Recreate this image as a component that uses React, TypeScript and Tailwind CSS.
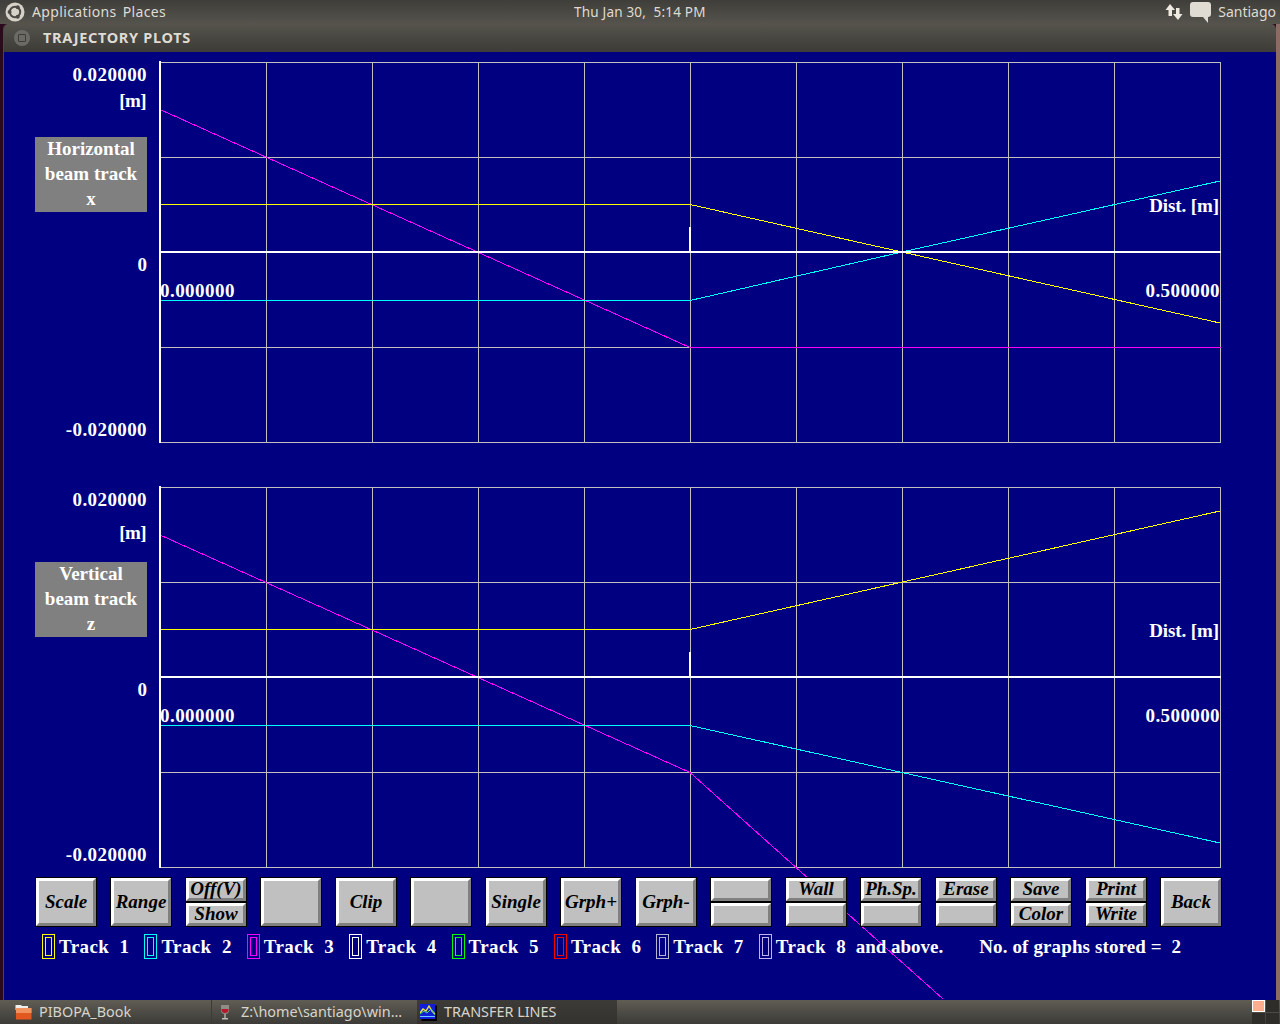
import React from 'react';

const BUTTONS: (string | [string, string])[] = [
  'Scale', 'Range', ['Off(V)', 'Show'], '', 'Clip', '', 'Single', 'Grph+', 'Grph-',
  ['', ''], ['Wall', ''], ['Ph.Sp.', ''], ['Erase', ''], ['Save', 'Color'], ['Print', 'Write'], 'Back',
];

const TRACKS = [
  { label: 'Track  1', color: 'border-[#ffff00]' },
  { label: 'Track  2', color: 'border-[#00ffff]' },
  { label: 'Track  3', color: 'border-[#ff00ff]' },
  { label: 'Track  4', color: 'border-[#ffffff]' },
  { label: 'Track  5', color: 'border-[#00ff00]' },
  { label: 'Track  6', color: 'border-[#ff0000]' },
  { label: 'Track  7', color: 'border-[#b4b4d2]' },
];

const VLINES = [106, 212, 318, 424, 530, 636, 742, 848, 954];

interface Line {
  points: string;
  color: string;
}

const Plot: React.FC<{ lines: Line[] }> = ({ lines }) => (
  <div className="relative h-[381px] w-[1061px] shrink-0">
    <svg width="1061" height="381" className="absolute left-0 top-0 overflow-visible">
      <g shapeRendering="crispEdges" stroke="#c0c0c0" strokeWidth="1">
        {VLINES.map((x) => (
          <line key={x} x1={x + 0.5} y1="0" x2={x + 0.5} y2="381" />
        ))}
        <line x1="1060.5" y1="0" x2="1060.5" y2="381" />
        <line x1="0" y1="0.5" x2="1061" y2="0.5" />
        <line x1="0" y1="95.5" x2="1061" y2="95.5" />
        <line x1="0" y1="285.5" x2="1061" y2="285.5" />
        <line x1="0" y1="380.5" x2="1061" y2="380.5" />
      </g>
      {lines.map((l, i) => (
        <polyline key={i} points={l.points} fill="none" stroke={l.color} strokeWidth="1" shapeRendering="crispEdges" />
      ))}
      <rect x="-1" y="-1" width="2" height="382" fill="#ffffff" shapeRendering="crispEdges" />
      <rect x="0" y="189" width="1061" height="2" fill="#ffffff" shapeRendering="crispEdges" />
      <rect x="529" y="165" width="2" height="24" fill="#ffffff" shapeRendering="crispEdges" />
    </svg>
    <span className="absolute right-[2px] top-[133px] text-[19px] font-bold leading-[22px] tracking-[-0.1px] text-white">Dist. [m]</span>
    <span className="absolute left-0 top-[218px] text-[19px] font-bold leading-[22px] tracking-[0.45px] text-white">0.000000</span>
    <span className="absolute right-[1px] top-[218px] text-[19px] font-bold leading-[22px] tracking-[0.4px] text-white">0.500000</span>
  </div>
);

const AxisColumn: React.FC<{ title: string; axis: string; unitClass: string }> = ({ title, axis, unitClass }) => (
  <div className="flex h-[381px] w-[156px] shrink-0 flex-col items-end pr-[13px] text-[19px] font-bold leading-[22px] text-white">
    <div className="h-[75px] w-full text-right">
      <div className="mt-[2px] tracking-[0.4px]">0.020000</div>
      <div className={`pr-px tracking-[-0.6px] ${unitClass}`}>[m]</div>
    </div>
    <div className="flex h-[75px] w-[112px] flex-col items-center justify-center bg-[#808080] pb-[2px] leading-[25px]">
      <div>{title}</div>
      <div>beam track</div>
      <div>{axis}</div>
    </div>
    <div className="mt-[42px]">0</div>
    <div className="mb-[2px] mt-auto tracking-[0.4px]">-0.020000</div>
  </div>
);

const Bevel: React.FC<{ label: string; className: string }> = ({ label, className }) => (
  <div className={`border border-black ${className}`}>
    <div className="flex h-full items-center justify-center border-[3px] border-b-[#808080] border-l-white border-r-[#808080] border-t-white bg-[#c0c0c0] pb-[2px] text-[19px] font-bold italic leading-none text-black">
      {label}
    </div>
  </div>
);

const UbuntuLogo = () => (
  <svg width="20" height="20" viewBox="0 0 20 20">
    <circle cx="10" cy="10" r="9.5" fill="#d6d2c9" />
    <circle cx="10" cy="10" r="5.2" fill="none" stroke="#4a4944" strokeWidth="2" />
    <circle cx="4.6" cy="10" r="2" fill="#4a4944" />
    <circle cx="12.7" cy="5.3" r="2" fill="#4a4944" />
    <circle cx="12.7" cy="14.7" r="2" fill="#4a4944" />
  </svg>
);

const NetworkArrows = () => (
  <svg width="18" height="18" viewBox="0 0 18 18" fill="#eeeae2">
    <path d="M5 1 L10 7 L7 7 L7 13 L3.5 13 L3.5 7 L0.5 7 Z" />
    <path d="M13 17 L8 11 L11 11 L11 5 L14.5 5 L14.5 11 L17.5 11 Z" />
  </svg>
);

const ChatBubble = () => (
  <svg width="24" height="23" viewBox="0 0 24 23" fill="#e0dcd3">
    <path d="M4 1 H19 Q22 1 22 4 V13 Q22 16 19 16 V22 L14 16 H4 Q1 16 1 13 V4 Q1 1 4 1 Z" />
  </svg>
);

const FolderIcon = () => (
  <svg width="17" height="16" viewBox="0 0 17 16">
    <path d="M0.5 1 H6 L7 2 H13 V6 H0.5 Z" fill="#eeeeec" />
    <rect x="1" y="4" width="15.5" height="11.5" fill="#e2581f" />
    <rect x="1" y="4" width="15.5" height="5" fill="#f0935f" />
  </svg>
);

const WineIcon = () => (
  <svg width="10" height="16" viewBox="0 0 10 16">
    <path d="M1 1 H9 L9 6 Q9 10 5 10 Q1 10 1 6 Z" fill="#8f8d86" />
    <path d="M1.5 5 H8.5 Q8.5 9 5 9 Q1.5 9 1.5 5 Z" fill="#b5172a" />
    <rect x="4.2" y="10" width="1.6" height="4" fill="#a8a69f" />
    <rect x="2" y="14" width="6" height="1.5" fill="#c0beb6" />
  </svg>
);

const ChartIcon = () => (
  <svg width="17" height="17" viewBox="0 0 17 17">
    <rect x="1.5" y="1.5" width="15.5" height="15.5" fill="#000000" />
    <rect x="0" y="0" width="15" height="15" fill="#0f1fd8" />
    <polyline points="0,9 3,5 6,7 9,2 12,7 15,10" fill="none" stroke="#f2e23c" strokeWidth="1.4" />
    <polyline points="0,10 4,7 7,9 11,5 15,11" fill="none" stroke="#4fd07a" strokeWidth="1" />
    <rect x="0" y="12" width="15" height="1" fill="#6cc8ff" />
  </svg>
);

export default function App() {
  return (
    <div className="flex h-[1024px] w-[1280px] flex-col overflow-hidden bg-[#2c0a1e] font-['Noto_Sans',sans-serif]">
      {/* top panel */}
      <div className="relative flex h-[24px] shrink-0 items-center bg-gradient-to-b from-[#3f3e3a] to-[#55534c] text-[14px] text-[#dfdbd2]">
        <div className="ml-[5px]">
          <UbuntuLogo />
        </div>
        <span className="mb-[2px] ml-[7px] tracking-[0.35px]">Applications</span>
        <span className="mb-[2px] ml-[6px] tracking-[0.35px]">Places</span>
        <span className="absolute left-[574px] top-[2px] whitespace-pre text-[13.5px] tracking-[0.2px]">Thu Jan 30,  5:14 PM</span>
        <div className="ml-auto flex items-center">
          <NetworkArrows />
          <div className="ml-[6px]">
            <ChatBubble />
          </div>
          <span className="mb-[2px] ml-[5px] mr-[4px]">Santiago</span>
        </div>
      </div>

      {/* window */}
      <div className="flex min-h-0 flex-1">
        <div className="w-[3px] shrink-0 bg-[#2c0a1e]" />
        <div className="flex min-w-0 flex-1 flex-col overflow-hidden rounded-t-[5px] border-l border-[#4a4944]">
          <div className="flex h-[28px] shrink-0 items-center bg-gradient-to-b from-[#55534c] to-[#3c3b37] pl-[10px]">
            <div className="flex h-[16px] w-[16px] items-center justify-center rounded-full bg-[#6b6a65]">
              <div className="h-[8px] w-[8px] rounded-[1px] border border-[#3c3b37]" />
            </div>
            <span className="ml-[13px] text-[14.5px] font-bold tracking-[0.68px] text-[#dfdbd2]">TRAJECTORY PLOTS</span>
          </div>

          <div className="flex min-h-0 flex-1 flex-col overflow-hidden bg-[#000080] pt-[10px] font-['Liberation_Serif',serif]">
            <div className="flex">
              <AxisColumn title="Horizontal" axis="x" unitClass="mt-[4px]" />
              <Plot
                lines={[
                  { points: '0,47.5 530,285.5 1061,285.5', color: '#ff00ff' },
                  { points: '0,142.5 530,142.5 742,190 1060,261', color: '#ffff00' },
                  { points: '0,238.5 530,238.5 742,190 1060,119', color: '#00ffff' },
                ]}
              />
            </div>
            <div className="mt-[44px] flex">
              <AxisColumn title="Vertical" axis="z" unitClass="mt-[11px]" />
              <Plot
                lines={[
                  { points: '0,48 530,285.5 636,380.5 783,512', color: '#ff00ff' },
                  { points: '0,142.5 530,142.5 1060,24', color: '#ffff00' },
                  { points: '0,238.5 530,238.5 1060,356', color: '#00ffff' },
                ]}
              />
            </div>

            {/* button row */}
            <div className="relative z-10 ml-[31px] mt-[9px] flex h-[50px] gap-[13px]">
              {BUTTONS.map((b, i) =>
                Array.isArray(b) ? (
                  <div key={i} className="flex w-[62px] flex-col">
                    <Bevel label={b[0]} className="h-[25px]" />
                    <Bevel label={b[1]} className="h-[25px]" />
                  </div>
                ) : (
                  <Bevel key={i} label={b} className="h-[50px] w-[62px]" />
                ),
              )}
            </div>

            {/* track legend */}
            <div className="relative z-10 ml-[38px] mt-[7px] flex h-[25px] items-center whitespace-pre text-[19px] font-bold leading-none text-white">
              {TRACKS.map((t) => (
                <div key={t.label} className="flex w-[102.4px] shrink-0 items-center">
                  <div className={`flex h-[25px] w-[13px] items-center justify-center border ${t.color}`}>
                    <div className={`h-[19px] w-[7px] border ${t.color}`} />
                  </div>
                  <span className="-mt-px ml-[4px] tracking-[0.4px]">{t.label}</span>
                </div>
              ))}
              <div className="flex items-center">
                <div className="flex h-[25px] w-[13px] items-center justify-center border border-[#c0b4f0]">
                  <div className="h-[19px] w-[7px] border border-[#c0b4f0]" />
                </div>
                <span className="-mt-px ml-[4px]">
                  <span className="tracking-[0.4px]">Track  8</span>  and above.
                </span>
              </div>
              <span className="-mt-px ml-[36px] tracking-[0.12px]">No. of graphs stored =  2</span>
            </div>
          </div>
        </div>
        <div className="w-[4px] shrink-0 bg-[#8a6c62]" />
      </div>

      {/* bottom panel */}
      <div className="flex h-[24px] shrink-0 items-stretch bg-gradient-to-b from-[#5f5d54] to-[#3c3b37] text-[14.4px] text-[#d8d4cb]">
        <div className="flex w-[212px] items-center border-r border-[#3c3b37] pl-[15px]">
          <FolderIcon />
          <span className="mb-px ml-[7px]">PIBOPA_Book</span>
        </div>
        <div className="flex w-[205px] items-center pl-[8px]">
          <WineIcon />
          <span className="mb-px ml-[11px]">Z:\home\santiago\win...</span>
        </div>
        <div className="flex w-[200px] items-center bg-gradient-to-b from-[#3c3b37] to-[#33322e] pl-[3px]">
          <ChartIcon />
          <span className="mb-px ml-[7px]">TRANSFER LINES</span>
        </div>
        <div className="ml-auto grid h-[24px] w-[28px] grid-cols-2 grid-rows-2 gap-px pr-px">
          <div className="border border-white bg-[#ffad8f]" />
          <div className="bg-[#2e2d2a]" />
          <div className="bg-[#2e2d2a]" />
          <div className="bg-[#2e2d2a]" />
        </div>
      </div>
    </div>
  );
}
